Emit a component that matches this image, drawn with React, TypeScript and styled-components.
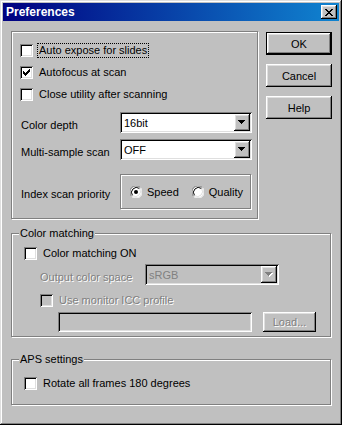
import React from "react";
import styled, { createGlobalStyle } from "styled-components";

const GlobalStyle = createGlobalStyle`
  html, body {
    margin: 0;
    padding: 0;
    background: #c0c0c0;
  }
  body {
    font-family: "Liberation Sans", Arial, sans-serif;
    font-size: 11px;
    color: #000;
  }
`;

const raised = `
  box-shadow: inset -1px -1px #000, inset 1px 1px #fff,
    inset -2px -2px #808080, inset 2px 2px #dfdfdf;
`;

const sunken = `
  box-shadow: inset 1px 1px #808080, inset -1px -1px #fff,
    inset 2px 2px #000, inset -2px -2px #dfdfdf;
`;

const etched = `
  border: 1px solid #808080;
  box-shadow: inset 1px 1px #fff, 1px 1px #fff;
`;

const Window = styled.div`
  width: 342px;
  height: 425px;
  box-sizing: border-box;
  padding: 3px;
  background: #c0c0c0;
  box-shadow: inset -1px -1px #000, inset 1px 1px #dfdfdf,
    inset -2px -2px #808080, inset 2px 2px #fff;
  display: flex;
  flex-direction: column;
`;

const TitleBar = styled.div`
  height: 18px;
  display: flex;
  align-items: center;
  justify-content: space-between;
  padding: 0 2px 0 3px;
  background: linear-gradient(to right, #000080, #1084d0);
  color: #fff;
  font-weight: bold;
  font-size: 12px;
`;

const CloseButton = styled.div`
  width: 16px;
  height: 14px;
  background: #c0c0c0;
  display: flex;
  align-items: center;
  justify-content: center;
  ${raised}
`;

const Body = styled.div`
  padding: 10px 7px 0 8px;
  display: flex;
  flex-direction: column;
`;

const TopRow = styled.div`
  display: flex;
  justify-content: space-between;
  align-items: flex-start;
`;

const Panel = styled.div`
  ${etched}
  width: 245px;
  padding: 7px 0 9px 0;
  display: flex;
  flex-direction: column;
`;

const ButtonColumn = styled.div`
  margin-top: 1px;
  width: 66px;
  display: flex;
  flex-direction: column;
  gap: 9px;
`;

const Button = styled.div<{ $default?: boolean; $disabled?: boolean }>`
  height: 23px;
  box-sizing: border-box;
  display: flex;
  align-items: center;
  justify-content: center;
  background: #c0c0c0;
  color: ${(p) => (p.$disabled ? "#808080" : "#000")};
  text-shadow: ${(p) => (p.$disabled ? "1px 1px #fff" : "none")};
  ${(p) =>
    p.$default
      ? `border: 1px solid #000;
         box-shadow: inset -1px -1px #000, inset 1px 1px #fff,
           inset -2px -2px #808080, inset 2px 2px #dfdfdf;`
      : raised}
`;

const LoadButton = styled(Button)`
  width: 53px;
  height: 20px;
  margin-left: 11px;
`;

const CheckRow = styled.div<{ $indent: number; $h?: number; $mt?: number }>`
  display: flex;
  align-items: center;
  height: ${(p) => p.$h ?? 22}px;
  margin-top: ${(p) => p.$mt ?? 0}px;
  padding-left: ${(p) => p.$indent}px;
`;

const Box = styled.div<{ $disabled?: boolean }>`
  width: 13px;
  height: 13px;
  flex: none;
  background: ${(p) => (p.$disabled ? "#c0c0c0" : "#fff")};
  display: flex;
  align-items: center;
  justify-content: center;
  ${sunken}
`;

const CheckText = styled.span<{ $focus?: boolean; $disabled?: boolean }>`
  margin-left: 4px;
  padding: 0 1px;
  line-height: 13px;
  border: 1px dotted ${(p) => (p.$focus ? "#000" : "transparent")};
  color: ${(p) => (p.$disabled ? "#808080" : "#000")};
  text-shadow: ${(p) => (p.$disabled ? "1px 1px #fff" : "none")};
  white-space: nowrap;
`;

const FieldRow = styled.div<{ $indent: number; $mt: number; $labelWidth: number }>`
  display: flex;
  align-items: center;
  margin-top: ${(p) => p.$mt}px;
  padding-left: ${(p) => p.$indent}px;

  & > label {
    width: ${(p) => p.$labelWidth}px;
    flex: none;
    padding-top: 4px;
    white-space: nowrap;
  }
`;

const FieldLabel = styled.label<{ $disabled?: boolean }>`
  color: ${(p) => (p.$disabled ? "#808080" : "#000")};
  text-shadow: ${(p) => (p.$disabled ? "1px 1px #fff" : "none")};
`;

const Select = styled.div<{ $width: number; $disabled?: boolean }>`
  width: ${(p) => p.$width}px;
  height: 21px;
  box-sizing: border-box;
  padding: 2px;
  display: flex;
  align-items: center;
  background: ${(p) => (p.$disabled ? "#c0c0c0" : "#fff")};
  ${sunken}

  span {
    flex: 1;
    padding-left: 2px;
    color: ${(p) => (p.$disabled ? "#808080" : "#000")};
  }
`;

const DropButton = styled.div`
  width: 16px;
  height: 17px;
  background: #c0c0c0;
  display: flex;
  align-items: center;
  justify-content: center;
  ${raised}
`;

const RadioBox = styled.div`
  ${etched}
  width: 120px;
  height: 33px;
  box-sizing: content-box;
  display: flex;
  align-items: center;
  padding-left: 9px;
`;

const RadioItem = styled.div<{ $gap?: number }>`
  display: flex;
  align-items: center;
  margin-left: ${(p) => p.$gap ?? 0}px;

  span {
    margin-left: 5px;
  }
`;

const RadioCircle = styled.div`
  width: 12px;
  height: 12px;
  flex: none;
`;

const GroupBox = styled.div<{ $mt: number; $pb: number }>`
  ${etched}
  width: 318px;
  margin-top: ${(p) => p.$mt}px;
  padding-bottom: ${(p) => p.$pb}px;
  display: flex;
  flex-direction: column;
`;

const Caption = styled.div`
  align-self: flex-start;
  margin: -7px 0 0 7px;
  padding: 0 1px;
  line-height: 13px;
  background: #c0c0c0;
`;

const TextBox = styled.div`
  width: 194px;
  height: 20px;
  box-sizing: border-box;
  background: #c0c0c0;
  ${sunken}
`;

const PathRow = styled.div`
  display: flex;
  align-items: center;
  margin-top: 2px;
  padding-left: 46px;
`;

const Check = () => (
  <svg width="7" height="7" viewBox="0 0 7 7" shapeRendering="crispEdges">
    <path
      d="M6 0h1v3h-1zM5 1h1v3h-1zM4 2h1v3h-1zM3 3h1v3h-1zM2 4h1v3h-1zM1 3h1v3h-1zM0 2h1v3h-1z"
      fill="#000"
    />
  </svg>
);

const Arrow = ({ disabled }: { disabled?: boolean }) => (
  <svg width="8" height="5" viewBox="0 0 8 5" shapeRendering="crispEdges">
    {disabled && <path d="M1 1h7v1h-7zM2 2h5v1h-5zM3 3h3v1h-3zM4 4h1v1h-1z" fill="#fff" />}
    <path
      d="M0 0h7v1h-7zM1 1h5v1h-5zM2 2h3v1h-3zM3 3h1v1h-1z"
      fill={disabled ? "#808080" : "#000"}
    />
  </svg>
);

const CloseIcon = () => (
  <svg width="8" height="7" viewBox="0 0 8 7" shapeRendering="crispEdges">
    <path
      d="M0 0h2v1h-2zM6 0h2v1h-2zM1 1h2v1h-2zM5 1h2v1h-2zM2 2h4v1h-4zM3 3h2v1h-2zM2 4h4v1h-4zM1 5h2v1h-2zM5 5h2v1h-2zM0 6h2v1h-2zM6 6h2v1h-2z"
      fill="#000"
    />
  </svg>
);

const Radio = ({ checked }: { checked?: boolean }) => (
  <RadioCircle>
    <svg width="12" height="12" viewBox="0 0 12 12">
      <circle cx="6" cy="6" r="5.5" fill="#fff" />
      <path d="M1.6 10.4A6 6 0 0 1 10.4 1.6" fill="none" stroke="#808080" strokeWidth="1" />
      <path d="M2.5 9.5A5 5 0 0 1 9.5 2.5" fill="none" stroke="#000" strokeWidth="1" />
      <path d="M10.4 1.6A6 6 0 0 1 1.6 10.4" fill="none" stroke="#fff" strokeWidth="1" />
      <path d="M9.5 2.5A5 5 0 0 1 2.5 9.5" fill="none" stroke="#dfdfdf" strokeWidth="1" />
      {checked && <circle cx="6" cy="6" r="2" fill="#000" />}
    </svg>
  </RadioCircle>
);

const Dropdown = ({ value, width, disabled }: { value: string; width: number; disabled?: boolean }) => (
  <Select $width={width} $disabled={disabled}>
    <span>{value}</span>
    <DropButton>
      <Arrow disabled={disabled} />
    </DropButton>
  </Select>
);

const App = () => {
  return (
    <>
      <GlobalStyle />
      <Window>
        <TitleBar>
          <span>Preferences</span>
          <CloseButton>
            <CloseIcon />
          </CloseButton>
        </TitleBar>
        <Body>
          <TopRow>
            <Panel>
              <CheckRow $indent={8}>
                <Box />
                <CheckText $focus>Auto expose for slides</CheckText>
              </CheckRow>
              <CheckRow $indent={8}>
                <Box>
                  <Check />
                </Box>
                <CheckText>Autofocus at scan</CheckText>
              </CheckRow>
              <CheckRow $indent={8}>
                <Box />
                <CheckText>Close utility after scanning</CheckText>
              </CheckRow>
              <FieldRow $indent={9} $mt={7} $labelWidth={99}>
                <FieldLabel>Color depth</FieldLabel>
                <Dropdown value="16bit" width={132} />
              </FieldRow>
              <FieldRow $indent={9} $mt={6} $labelWidth={99}>
                <FieldLabel>Multi-sample scan</FieldLabel>
                <Dropdown value="OFF" width={132} />
              </FieldRow>
              <FieldRow $indent={9} $mt={14} $labelWidth={99}>
                <FieldLabel>Index scan priority</FieldLabel>
                <RadioBox>
                  <RadioItem>
                    <Radio checked />
                    <span>Speed</span>
                  </RadioItem>
                  <RadioItem $gap={13}>
                    <Radio />
                    <span>Quality</span>
                  </RadioItem>
                </RadioBox>
              </FieldRow>
            </Panel>
            <ButtonColumn>
              <Button $default>OK</Button>
              <Button>Cancel</Button>
              <Button>Help</Button>
            </ButtonColumn>
          </TopRow>

          <GroupBox $mt={14} $pb={4}>
            <Caption>Color matching</Caption>
            <CheckRow $indent={12} $h={20} $mt={3}>
              <Box />
              <CheckText>Color matching ON</CheckText>
            </CheckRow>
            <FieldRow $indent={28} $mt={1} $labelWidth={105}>
              <FieldLabel $disabled>Output color space</FieldLabel>
              <Dropdown value="sRGB" width={134} disabled />
            </FieldRow>
            <CheckRow $indent={28} $h={20} $mt={5}>
              <Box $disabled />
              <CheckText $disabled>Use monitor ICC profile</CheckText>
            </CheckRow>
            <PathRow>
              <TextBox />
              <LoadButton $disabled>Load...</LoadButton>
            </PathRow>
          </GroupBox>

          <GroupBox $mt={22} $pb={11}>
            <Caption>APS settings</Caption>
            <CheckRow $indent={12} $h={20} $mt={7}>
              <Box />
              <CheckText>Rotate all frames 180 degrees</CheckText>
            </CheckRow>
          </GroupBox>
        </Body>
      </Window>
    </>
  );
};

export default App;
